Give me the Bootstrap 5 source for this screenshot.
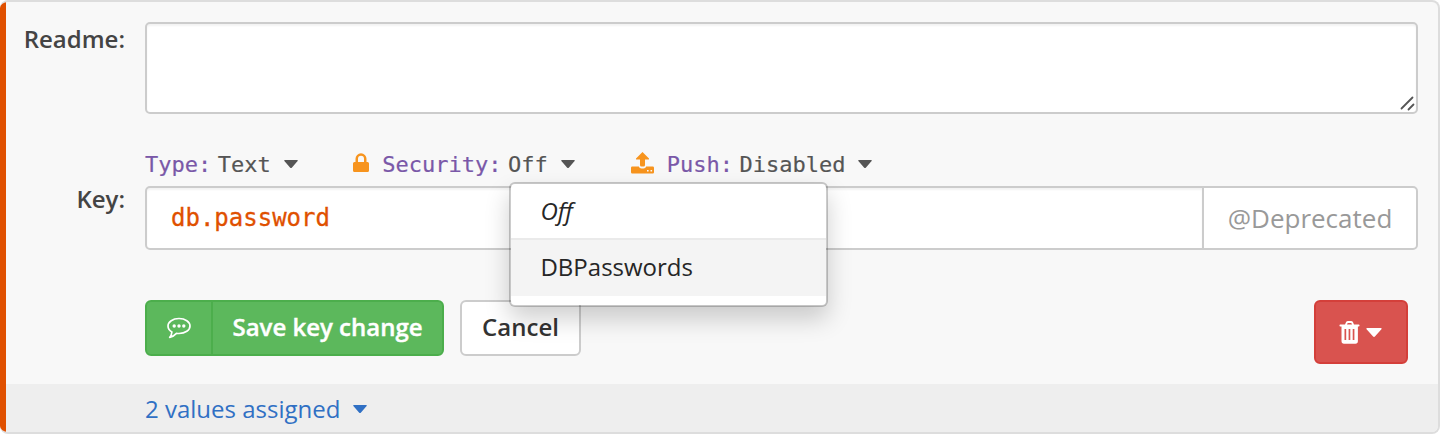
<!DOCTYPE html>
<html lang="en">
<head>
<meta charset="utf-8">
<title>Key editor</title>
<link rel="stylesheet" href="https://cdn.jsdelivr.net/npm/bootstrap@5.3.0/dist/css/bootstrap.min.css">
<style>
body { font-family: "Open Sans", sans-serif; font-size: 24px; line-height: 34px; color: #444; background: #fff; overflow: hidden; }
.key-panel { height: 434px; background: #f8f8f8; border: 2px solid #ddd; border-left: 0; border-radius: 8px; overflow: hidden; position: relative; }
.accent { width: 6px; background: #e05000; margin: -1px 0; border-radius: 5px 0 0 5px; }
.key-label { width: 139px; padding-right: 20px; font-weight: 600; }
.form-control.readme { height: 92px; resize: none; }
.form-control { border: 2px solid #ccc; border-radius: 5px; box-shadow: inset 0 2px 2px rgba(0,0,0,.05); }
.field-wrap { width: 1273px; }
.grip { right: 2px; bottom: 3px; }
.meta { height: 44px; margin-top: 28px; font: 22px/44px "DejaVu Sans Mono", monospace; color: #555; -webkit-text-stroke: .2px currentColor; }
.meta > span, .meta .dropdown > span { position: relative; top: 1px; }
.meta .name { color: #7a58a8; margin-right: 6.500px; }
.meta svg { display: block; flex: none; }
.key-input { height: 64px; padding: 0 24px; font: 24px "DejaVu Sans Mono", monospace; color: #e05000 !important; -webkit-text-stroke: .3px #e05000; }
.input-group > .tag-addon { width: 216px; margin-left: -2px !important; background: #fff; border: 2px solid #ccc; border-radius: 5px; color: #999; font-size: 26px; justify-content: center; padding: 0; }
.btn { --bs-btn-font-size: 24px; --bs-btn-line-height: 34px; border-width: 2px; border-radius: 6px; font-weight: 600; height: 56px; padding: 0 0 2px; }
.btn-save { width: 299px; padding: 0; background: #5cb85c; border-color: #4cae4c; color: #fff; }
.btn-save .caption { padding-bottom: 2px; -webkit-text-stroke: .4px #fff; }
.btn-save .ico { width: 66px; border-right: 2px solid #4cae4c; }
.btn-cancel { width: 121px; margin-left: 16px; background: #fff; border-color: #ccc; color: #333; }
.btn-trash { width: 94px; height: 64px; padding: 0 2px 0 0; background: #d9534f; border-color: #d43f3a; margin-right: 10px; }
.footer-bar { height: 48px; background: #eee; padding: 2px 0 0 139px; color: #3070c4; }
.dropdown-menu.security { left: 1.500px; top: 40px; width: 319px; height: 125px; padding: 0; border: 2px solid rgba(0,0,0,.2); border-radius: 6px; background-clip: padding-box; box-shadow: 0 12px 24px rgba(0,0,0,.19); font: 24px/34px "Open Sans", sans-serif; overflow: hidden; -webkit-text-stroke: 0; }
.security .dropdown-item { color: #262626; padding: 10px 29px 12px; height: 56px; }
.security .dropdown-item:first-child { height: 54px; }
.security .on { background: #f4f4f4; }
.security .dropdown-divider { margin: 0; border-top: 2px solid #eaeaea; opacity: 1; }
</style>
</head>
<body>
<main class="key-panel d-flex">
  <div class="accent flex-shrink-0"></div>
  <div class="flex-grow-1 d-flex flex-column">
    <div class="d-flex" style="padding-top:20px">
      <div class="key-label text-end flex-shrink-0">Readme:</div>
      <div class="field-wrap position-relative">
        <textarea class="form-control readme" aria-label="Readme"></textarea>
        <svg class="grip position-absolute" width="16" height="16" viewBox="0 0 16 16" stroke="#555" stroke-width="1.8" stroke-linecap="round"><path d="M1.5 13.5 12.5 2.5M8.5 14.5 13.5 9.5"/></svg>
      </div>
    </div>
    <div class="d-flex">
      <div class="key-label text-end flex-shrink-0" style="padding-top:68px">Key:</div>
      <div class="field-wrap">
        <div class="meta d-flex align-items-center">
          <span class="name">Type:</span><span>Text</span>
          <svg width="14" height="8" viewBox="0 0 14 8" style="margin-left:13px" fill="#555"><path d="M1 0H13Q14.6 0 13.4 1.3L8 7.4Q7 8.5 6 7.4L.6 1.3Q-.6 0 1 0Z"/></svg>
          <svg width="16" height="20" viewBox="0 0 16 20" style="margin:0 0 2px 55px" fill="#f7941e"><path fill-rule="evenodd" d="M2.5 9V5.8a5.5 5.5 0 0 1 11 0V9h1q1.5 0 1.5 1.5v7q0 1.5-1.5 1.5h-13Q0 19 0 17.500v-7Q0 9 1.500 9ZM5 9h6V5.800a3 3 0 0 0-6 0Z"/></svg>
          <span class="name" style="margin-left:13.500px">Security:</span>
          <div class="dropdown"><span>Off</span>
            <div class="dropdown-menu show security">
              <a class="dropdown-item fst-italic">Off</a>
              <hr class="dropdown-divider">
              <a class="dropdown-item on">DBPasswords</a>
            </div>
          </div>
          <svg width="14" height="8" viewBox="0 0 14 8" style="margin-left:13px" fill="#555"><path d="M1 0H13Q14.6 0 13.4 1.3L8 7.4Q7 8.5 6 7.4L.6 1.3Q-.6 0 1 0Z"/></svg>
          <svg width="23" height="22" viewBox="0 0 23 22" style="margin:0 0 2px 56px" fill="#f7941e"><path fill-rule="evenodd" d="M11.500 0 18 6.500Q18.500 7.500 17.500 7.500H14V13q0 1.500-1.500 1.500h-2Q9 14.500 9 13V7.500H5.500Q4.500 7.500 5 6.500ZM1.300 14.500H7.800Q8.500 16.500 10.500 16.500h2q2 0 2.700-2h6.500Q23 14.500 23 15.800v4.500q0 1.300-1.300 1.300H1.300Q0 21.600 0 20.300v-4.500Q0 14.500 1.300 14.500ZM16 18v1.500h1.600V18Zm3.500 0v1.500h1.600V18Z"/></svg>
          <span class="name" style="margin-left:13px">Push:</span><span>Disabled</span>
          <svg width="14" height="8" viewBox="0 0 14 8" style="margin-left:13px" fill="#555"><path d="M1 0H13Q14.6 0 13.4 1.3L8 7.4Q7 8.5 6 7.4L.6 1.3Q-.6 0 1 0Z"/></svg>
        </div>
        <div class="input-group">
          <input class="form-control key-input" value="db.password" aria-label="Key">
          <span class="input-group-text tag-addon">@Deprecated</span>
        </div>
        <div class="d-flex" style="margin-top:50px">
          <button class="btn btn-save d-flex">
            <span class="ico h-100 d-flex align-items-center justify-content-center"><svg width="24" height="22" viewBox="0 0 24 22" fill="none" stroke="#fff" stroke-width="1.700" stroke-linejoin="round"><path d="M12 1.500c6.200 0 11 3.300 11 7.500s-4.800 7.500-11 7.500c-.9 0-1.700 0-2.500-.2C7.600 18.300 5.500 19.800 2.700 20.300c1.200-1.200 2-2.800 2.200-5.300C2.500 13.600 1 11.500 1 9 1 4.800 5.800 1.500 12 1.500Z"/><g fill="#fff" stroke="none"><circle cx="7.200" cy="9" r="1.700"/><circle cx="12" cy="9" r="1.700"/><circle cx="16.800" cy="9" r="1.700"/></g></svg></span>
            <span class="caption flex-grow-1 align-self-center">Save key change</span>
          </button>
          <button class="btn btn-cancel">Cancel</button>
          <button class="btn btn-trash ms-auto d-flex align-items-center justify-content-center">
            <svg width="21" height="23" viewBox="0 0 21 23" fill="#fff"><path fill-rule="evenodd" d="M6 3.500 7 1.300Q7.500 0 9 0h3q1.500 0 2 1.300l1 2.200h4.700q.8 0 .8.700v.6q0 .7-.8.700h-.8V20q0 2.700-2.500 2.700H5Q2.500 22.700 2.500 20V5.500H1.200Q.5 5.500.5 4.800v-.6q0-.7.7-.7ZM8 3.500h5l-.7-1.600H8.700ZM5.500 8v11h1.700V8Zm4.100 0v11h1.700V8Zm4.100 0v11h1.700V8Z"/></svg>
            <svg width="16" height="9" viewBox="0 0 14 8" style="margin-left:6px" fill="#fff"><path d="M1 0H13Q14.600 0 13.400 1.300L8 7.400Q7 8.500 6 7.400L.6 1.300Q-.6 0 1 0Z"/></svg>
          </button>
        </div>
      </div>
    </div>
    <div class="footer-bar d-flex align-items-center mt-auto"><span>2 values assigned</span>
      <svg width="14" height="8" viewBox="0 0 14 8" style="margin-left:13px" fill="#3070c4"><path d="M1 0H13Q14.6 0 13.4 1.3L8 7.4Q7 8.5 6 7.4L.6 1.3Q-.6 0 1 0Z"/></svg>
    </div>
  </div>
</main>
<script src="https://cdn.jsdelivr.net/npm/bootstrap@5.3.0/dist/js/bootstrap.bundle.min.js"></script>
</body>
</html>
